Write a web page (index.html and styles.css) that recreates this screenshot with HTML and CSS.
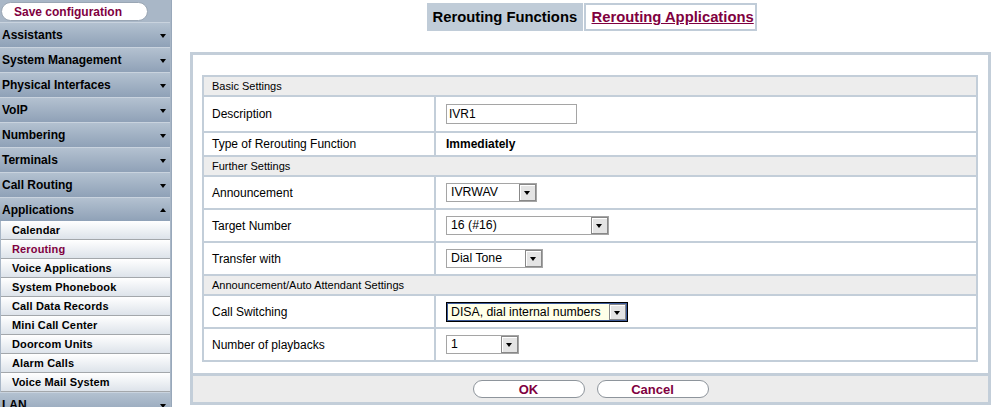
FILE: index.html
```html
<!DOCTYPE html>
<html>
<head>
<meta charset="utf-8">
<link rel="stylesheet" href="styles.css">
</head>
<body>
<div class="page">
  <nav class="sidebar">
    <div class="save-wrap"><button class="save">Save configuration</button></div>
    <div class="menu">
      <div class="mi">Assistants<span class="arr dn"></span></div>
      <div class="mi">System Management<span class="arr dn"></span></div>
      <div class="mi">Physical Interfaces<span class="arr dn"></span></div>
      <div class="mi">VoIP<span class="arr dn"></span></div>
      <div class="mi">Numbering<span class="arr dn"></span></div>
      <div class="mi">Terminals<span class="arr dn"></span></div>
      <div class="mi">Call Routing<span class="arr dn"></span></div>
      <div class="mi open">Applications<span class="arr up"></span></div>
      <div class="sub">
        <div class="si">Calendar</div>
        <div class="si active">Rerouting</div>
        <div class="si">Voice Applications</div>
        <div class="si">System Phonebook</div>
        <div class="si">Call Data Records</div>
        <div class="si">Mini Call Center</div>
        <div class="si">Doorcom Units</div>
        <div class="si">Alarm Calls</div>
        <div class="si">Voice Mail System</div>
      </div>
      <div class="mi">LAN<span class="arr dn"></span></div>
    </div>
  </nav>
  <main class="main">
    <div class="tabs">
      <div class="tab current">Rerouting Functions</div>
      <div class="tab other"><a href="#">Rerouting Applications</a></div>
    </div>
    <div class="panel">
      <div class="panel-body">
        <table class="form">
          <tr class="hdr"><td colspan="2">Basic Settings</td></tr>
          <tr class="r34"><td class="lbl">Description</td><td><span class="txt">IVR1</span></td></tr>
          <tr class="r22"><td class="lbl">Type of Rerouting Function</td><td class="val">Immediately</td></tr>
          <tr class="hdr"><td colspan="2">Further Settings</td></tr>
          <tr class="r31"><td class="lbl">Announcement</td><td><span class="sel w91">IVRWAV<span class="btn"><i></i></span></span></td></tr>
          <tr class="r31"><td class="lbl">Target Number</td><td><span class="sel w163">16 (#16)<span class="btn"><i></i></span></span></td></tr>
          <tr class="r31"><td class="lbl">Transfer with</td><td><span class="sel w97">Dial Tone<span class="btn"><i></i></span></span></td></tr>
          <tr class="hdr"><td colspan="2">Announcement/Auto Attendant Settings</td></tr>
          <tr class="r31"><td class="lbl">Call Switching</td><td><span class="sel w182 focus">DISA, dial internal numbers<span class="btn"><i></i></span></span></td></tr>
          <tr class="r31"><td class="lbl">Number of playbacks</td><td><span class="sel w73">1<span class="btn"><i></i></span></span></td></tr>
        </table>
      </div>
      <div class="footer">
        <button class="pill">OK</button>
        <button class="pill">Cancel</button>
      </div>
    </div>
  </main>
</div>
</body>
</html>
```
FILE: styles.css
```css
* { box-sizing: border-box; }
html, body { margin: 0; padding: 0; background: #fff; }
body { font-family: "Liberation Sans", Arial, sans-serif; font-size: 12px; color: #000; width: 992px; height: 407px; overflow: hidden; }
.page { display: flex; height: 407px; }

.sidebar { width: 172px; flex: none; background: #a9b7c7; border-right: 1px solid #98a8ba; padding-right: 1px; }
.save-wrap { height: 22px; padding: 2px 0 0 1px; }
.save { width: 147px; height: 19px; border: 1px solid #9aa6b4; border-radius: 10px; background: #fff; color: #800040; font: bold 12px "Liberation Sans", Arial, sans-serif; text-align: left; padding: 0 0 0 12px; margin: 0; }

.mi { position: relative; height: 25px; line-height: 24px; padding-left: 2px; font-weight: bold; font-size: 12px; color: #000; border-top: 1px solid #c9d3de; background: linear-gradient(#b3c1d0, #8fa1b7); }
.mi.open { height: 24px; }
.arr { position: absolute; right: 4px; top: 11px; width: 0; height: 0; border-left: 3.5px solid transparent; border-right: 3.5px solid transparent; }
.arr.dn { border-top: 4px solid #000; }
.arr.up { border-bottom: 4px solid #000; top: 10px; }

.sub { margin-left: 1px; }
.si { height: 19px; line-height: 18px; padding-left: 11px; font-weight: bold; font-size: 11px; letter-spacing: 0.15px; color: #000; border-bottom: 1px solid #a3a7ab; background: linear-gradient(#ffffff, #dde3ea); }
.si.active { color: #800040; }

.main { flex: 1; display: flex; flex-direction: column; padding: 3px 1px 2px 18px; }
.tabs { display: flex; justify-content: center; gap: 1px; height: 28px; padding-left: 2px; }
.tab { height: 28px; font-weight: bold; font-size: 14.8px; line-height: 28px; white-space: nowrap; }
.tab.current { background: #c0ccd8; padding: 0 0 0 6px; width: 156px; }
.tab.other { border: 2px solid #c0ccd8; padding: 0 0 0 6px; width: 173px; line-height: 24px; }
.tab.other a { color: #800040; text-decoration: underline; }

.panel { margin-top: 21px; border: 3px solid #c3ced9; flex: 1; display: flex; flex-direction: column; }
.panel-body { padding: 20px 9px 11px 9px; }
.form { width: 776px; border-spacing: 2px; background: #c3ced9; }
.form td { background: #fff; padding: 0 0 0 8px; vertical-align: middle; }
.form td.lbl { width: 230px; font-size: 12px; }
.form td:nth-child(2) { padding-left: 10px; }
.form tr.hdr td { background: #ededed; height: 18px; font-size: 11px; padding-left: 8px; }
.r34 td { height: 34px; }
.r22 td { height: 22px; }
.r31 td { height: 31px; }
.val { font-weight: bold; }

.txt { display: inline-block; width: 131px; height: 20px; border: 1px solid #a5a5a5; line-height: 18px; padding-left: 2px; font-size: 12px; vertical-align: middle; }
.sel { position: relative; display: inline-block; height: 19px; border: 1px solid #a5a5a5; line-height: 17px; padding-left: 4px; font-size: 12.3px; vertical-align: middle; background: #fff; }
.sel.focus { border: 1px solid #000; box-shadow: inset 0 0 0 1px #3b5998; background: #ffffe8; height: 20px; line-height: 18px; }
.btn { position: absolute; right: 0; top: 0; width: 17px; height: 17px; background: #e4e4e4; border: 1px solid #888; box-shadow: inset 1px 1px 0 #fff; }
.sel.focus .btn { right: 1px; top: 1px; height: 16px; }
.btn i { position: absolute; left: 4px; top: 6px; width: 0; height: 0; border-left: 3.5px solid transparent; border-right: 3.5px solid transparent; border-top: 4px solid #000; }
.w91 { width: 91px; }
.w163 { width: 163px; }
.w97 { width: 97px; }
.w182 { width: 182px; }
.w73 { width: 73px; }

.footer { margin-top: auto; border-top: 3px solid #c3ced9; background: #ececec; height: 29px; display: flex; justify-content: center; align-items: flex-start; gap: 12px; padding-top: 4px; }
.pill { width: 112px; height: 18px; border: 1px solid #8e959c; border-radius: 9px; background: #fff; color: #800040; font: bold 13px "Liberation Sans", Arial, sans-serif; padding: 0; margin: 0; line-height: 15px; }
```
